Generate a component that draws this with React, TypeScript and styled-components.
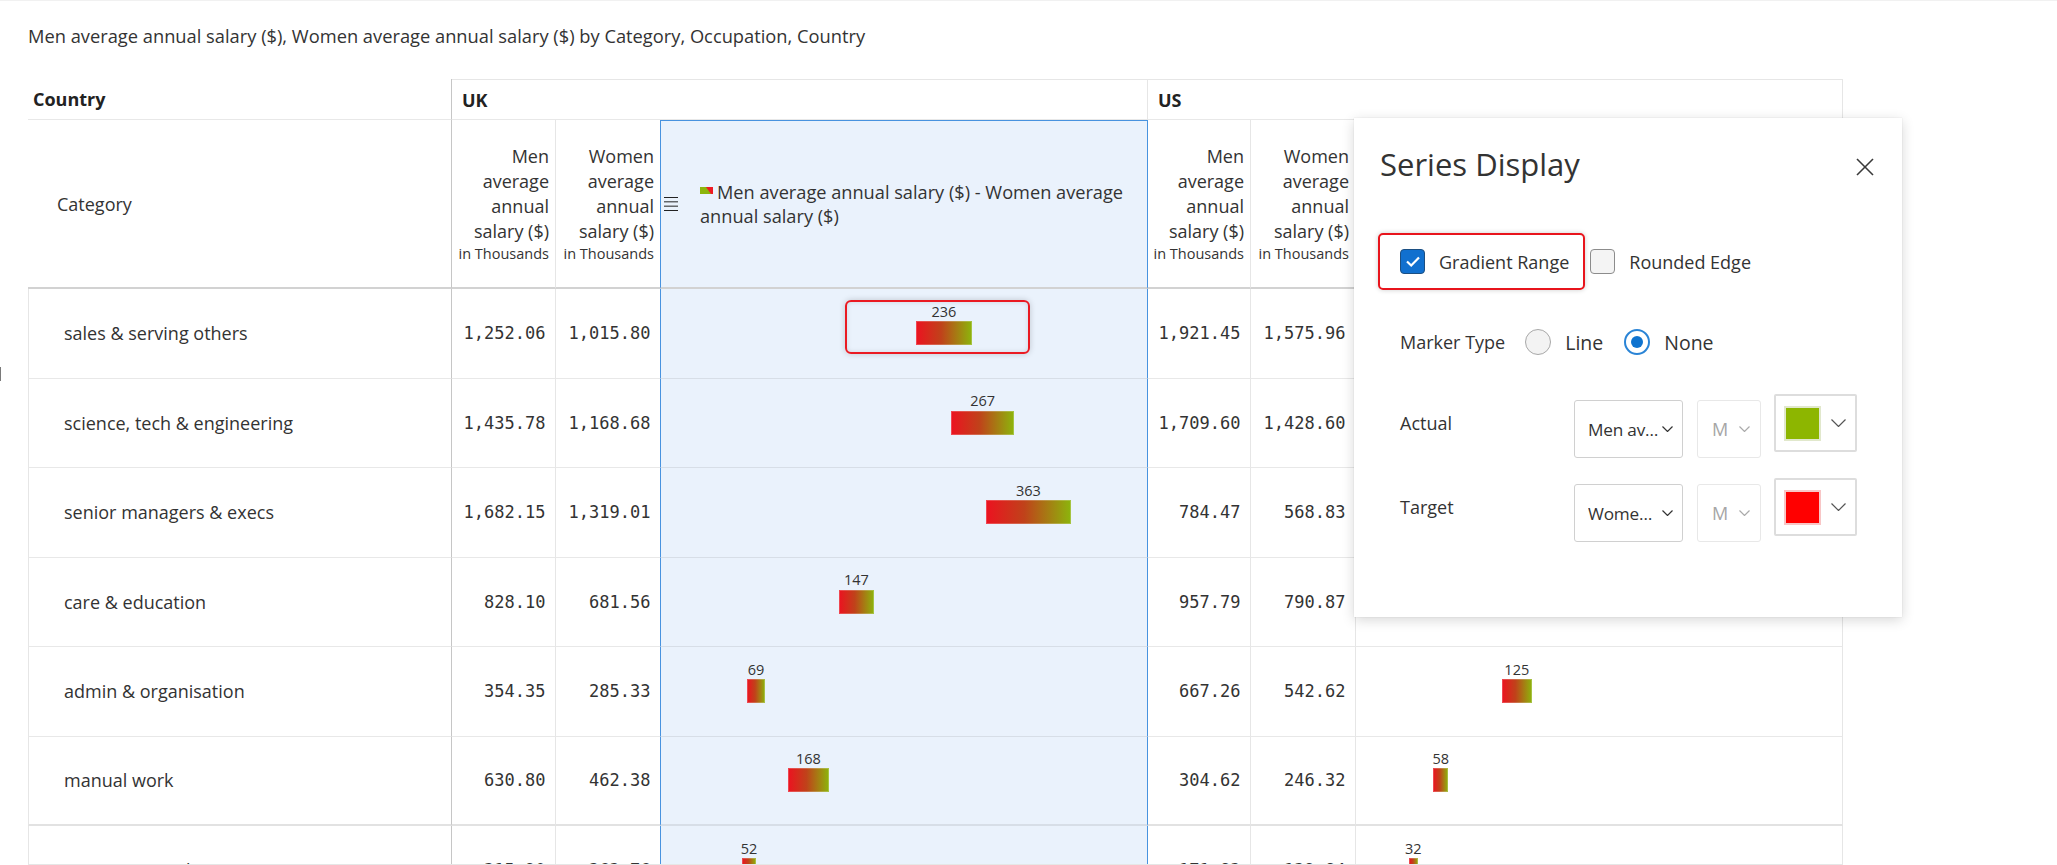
import React from 'react';
import styled, { createGlobalStyle, css } from 'styled-components';

const GlobalStyle = createGlobalStyle`
  html, body { margin: 0; padding: 0; background: #fff; }
  body { font-family: "Open Sans", "Noto Sans", Arial, sans-serif; color: #333; }
  * { box-sizing: border-box; }
`;

type Row = { label: string; ukMen: number; ukWomen: number; usMen: number; usWomen: number; strong?: boolean };

const rows: Row[] = [
  { label: 'sales & serving others', ukMen: 1252.06, ukWomen: 1015.8, usMen: 1921.45, usWomen: 1575.96 },
  { label: 'science, tech & engineering', ukMen: 1435.78, ukWomen: 1168.68, usMen: 1709.6, usWomen: 1428.6 },
  { label: 'senior managers & execs', ukMen: 1682.15, ukWomen: 1319.01, usMen: 784.47, usWomen: 568.83 },
  { label: 'care & education', ukMen: 828.1, ukWomen: 681.56, usMen: 957.79, usWomen: 790.87 },
  { label: 'admin & organisation', ukMen: 354.35, ukWomen: 285.33, usMen: 667.26, usWomen: 542.62 },
  { label: 'manual work', ukMen: 630.8, ukWomen: 462.38, usMen: 304.62, usWomen: 246.32, strong: true },
  { label: 'creative & media', ukMen: 315.9, ukWomen: 263.76, usMen: 171.83, usWomen: 139.84 },
];

const SCALE = 0.2307;
const fmt = (n: number) => n.toLocaleString('en-US', { minimumFractionDigits: 2, maximumFractionDigits: 2 });

const Page = styled.div`
  position: relative;
  height: 865px;
  overflow: hidden;
  padding: 23px 0 0 28px;
  border-top: 1px solid #f1f1f1;
`;

const Title = styled.div`
  font-size: 18.3px;
  line-height: 24px;
  color: #333;
`;

const TableWrap = styled.div`
  margin-top: 31px;
  width: 1815px;
  height: 786px;
  overflow: hidden;
  border-bottom: 1px solid #e6e6e6;
`;

const Grid = styled.div`
  display: grid;
  grid-template-columns: 424px 104px 104px 488px 103px 105px 487px;
`;

const CornerCell = styled.div`
  height: 41px;
  display: flex;
  align-items: center;
  padding-left: 5px;
  font-size: 18px;
  font-weight: 700;
  color: #222;
  border-right: 1px solid #c6c6c6;
  border-bottom: 1px solid #e8e8e8;
`;

const GroupCell = styled.div<{ $span: string }>`
  grid-column: ${(p) => p.$span};
  height: 41px;
  display: flex;
  align-items: center;
  padding-left: 10px;
  font-size: 18px;
  font-weight: 700;
  color: #222;
  border-top: 1px solid #e6e6e6;
  border-right: 1px solid #e6e6e6;
  border-bottom: 1px solid #e8e8e8;
`;

const CategoryHead = styled.div`
  height: 169px;
  display: flex;
  align-items: center;
  padding-left: 29px;
  font-size: 18px;
  color: #333;
  border-right: 1px solid #c6c6c6;
  border-bottom: 2px solid #d2d2d2;
`;

const MeasureHead = styled.div<{ $divider?: boolean }>`
  height: 169px;
  display: flex;
  flex-direction: column;
  justify-content: center;
  align-items: flex-end;
  text-align: right;
  padding: 0 6px 0 3px;
  font-size: 18px;
  line-height: 25px;
  color: #333;
  border-bottom: 2px solid #d2d2d2;
  ${(p) => p.$divider && 'border-right: 1px solid #e6e6e6;'}
`;

const Unit = styled.span`
  font-size: 14.5px;
  line-height: 19px;
  white-space: nowrap;
`;

const activeCol = css`
  background: #eaf2fc;
  border-left: 1px solid #4893df;
  border-right: 1px solid #4893df;
`;

const ChartHead = styled.div<{ $active?: boolean }>`
  height: 169px;
  display: flex;
  align-items: center;
  padding: 0 12px 0 3px;
  overflow: hidden;
  border-bottom: 2px solid #d2d2d2;
  border-right: 1px solid #e6e6e6;
  ${(p) => p.$active && activeCol}
  ${(p) => p.$active && 'border-top: 1px solid #4893df;'}
`;

const HeadText = styled.div`
  margin-left: 22px;
  font-size: 18.2px;
  line-height: 24.5px;
  color: #333;
`;

const LegendMark = styled.svg`
  margin-right: 4px;
  vertical-align: 5px;
`;

const rowBorder = (strong?: boolean) => (strong ? '2px solid #e2e2e2' : '1px solid #e8e8e8');

const LabelCell = styled.div<{ $strong?: boolean }>`
  height: 89.5px;
  display: flex;
  align-items: center;
  padding-left: 35px;
  font-size: 18px;
  color: #333;
  border-left: 1px solid #e6e6e6;
  border-right: 1px solid #c6c6c6;
  border-bottom: ${(p) => rowBorder(p.$strong)};
`;

const ValueCell = styled.div<{ $strong?: boolean; $divider?: boolean }>`
  height: 89.5px;
  display: flex;
  align-items: center;
  justify-content: flex-end;
  padding-right: 9.5px;
  font-family: "DejaVu Sans Mono", "Liberation Mono", monospace;
  font-size: 17px;
  color: #333;
  border-bottom: ${(p) => rowBorder(p.$strong)};
  ${(p) => p.$divider && 'border-right: 1px solid #e6e6e6;'}
`;

const ChartCell = styled.div<{ $strong?: boolean; $active?: boolean }>`
  height: 89.5px;
  display: flex;
  align-items: center;
  border-right: 1px solid #e6e6e6;
  border-bottom: ${(p) => rowBorder(p.$strong)};
  ${(p) => p.$active && activeCol}
  ${(p) => p.$active && `border-bottom-color: #d7dee7;`}
`;

const Bar = styled.div`
  position: relative;
  height: 24px;
  flex: none;
  background: linear-gradient(90deg, #ec1220 0%, #c0421a 45%, #8cb50c 100%);
  box-shadow: inset 0 0 0 1px rgba(255, 255, 255, 0.22);
`;

const BarLabel = styled.span`
  position: absolute;
  bottom: calc(100% + 2px);
  left: 50%;
  transform: translateX(-50%);
  font-size: 14.5px;
  line-height: 1;
  color: #333;
  white-space: nowrap;
`;

const Callout = styled.div`
  position: absolute;
  left: -71px;
  top: -21px;
  width: 185px;
  height: 54px;
  border: 2px solid #ea1a22;
  border-radius: 6px;
  box-shadow: 0 0 6px rgba(0, 0, 0, 0.18), inset 0 0 5px rgba(0, 0, 0, 0.12);
  pointer-events: none;
`;

const EdgeMark = styled.div`
  position: absolute;
  left: 0;
  top: 366px;
  width: 1px;
  height: 14px;
  background: #7a7a7a;
`;

/* ---------- Popup ---------- */

const Popup = styled.div`
  position: absolute;
  left: 1354px;
  top: 117px;
  width: 548px;
  height: 499px;
  background: #fff;
  box-shadow: 0 3px 12px rgba(0, 0, 0, 0.16), 0 0 1px rgba(0, 0, 0, 0.14);
  padding: 25px 28px 0 26px;
`;

const PopupHeader = styled.div`
  display: flex;
  align-items: center;
  justify-content: space-between;
  height: 42px;
`;

const PopupTitle = styled.h2`
  margin: 0;
  font-size: 31px;
  font-weight: 400;
  line-height: 42px;
  color: #333;
`;

const CloseButton = styled.button`
  border: 0;
  background: none;
  padding: 0;
  margin-top: 6px;
  width: 18px;
  height: 18px;
  display: flex;
`;

const CheckRow = styled.div`
  display: flex;
  align-items: center;
  gap: 21px;
  height: 25px;
  margin-top: 64px;
  padding-left: 20px;
`;

const CheckItem = styled.label`
  position: relative;
  display: flex;
  align-items: center;
  gap: 14px;
  font-size: 18px;
  color: #333;
`;

const CheckBox = styled.span<{ $checked?: boolean }>`
  width: 25px;
  height: 25px;
  border-radius: 4px;
  display: flex;
  align-items: center;
  justify-content: center;
  ${(p) =>
    p.$checked
      ? 'background: #1170cf; border: 1.5px solid #1c4f82;'
      : 'background: #f4f4f4; border: 1.5px solid #8c8c8c;'}
`;

const Highlight = styled.span`
  position: absolute;
  top: -16px;
  bottom: -16px;
  left: -22px;
  right: -16px;
  border: 2px solid #e8141c;
  border-radius: 5px;
  box-shadow: 0 0 5px rgba(0, 0, 0, 0.2);
  pointer-events: none;
`;

const MarkerRow = styled.div`
  display: flex;
  align-items: center;
  height: 26px;
  margin-top: 55px;
  padding-left: 20px;
`;

const FieldName = styled.span`
  font-size: 18px;
  color: #333;
  margin-right: 20px;
`;

const RadioOption = styled.label`
  display: flex;
  align-items: center;
  gap: 14px;
  font-size: 19.5px;
  color: #333;
  margin-right: 21px;
`;

const Radio = styled.span<{ $checked?: boolean }>`
  position: relative;
  width: 26px;
  height: 26px;
  border-radius: 50%;
  ${(p) =>
    p.$checked
      ? css`
          border: 2px solid #2a84d6;
          background: #fff;
          &::after {
            content: '';
            position: absolute;
            left: 50%;
            top: 50%;
            width: 12px;
            height: 12px;
            margin: -6px 0 0 -6px;
            border-radius: 50%;
            background: #0f73cf;
          }
        `
      : 'border: 1.5px solid #a8a8a8; background: #f3f3f3;'}
`;

const FieldRow = styled.div<{ $gap: number }>`
  display: flex;
  align-items: flex-start;
  margin-top: ${(p) => p.$gap}px;
  padding-left: 20px;
`;

const FieldLabel = styled.span`
  width: 174px;
  height: 58px;
  display: flex;
  align-items: center;
  font-size: 18px;
  color: #333;
`;

const Select = styled.div<{ $disabled?: boolean }>`
  margin-top: 6px;
  height: 58px;
  display: flex;
  align-items: center;
  border-radius: 3px;
  font-size: 18px;
  ${(p) =>
    p.$disabled
      ? 'width: 64px; margin-left: 14px; padding: 0 0 0 14px; gap: 11px; border: 1px solid #e8e8e8; color: #a6a6a6;'
      : 'width: 109px; padding: 0 9px 0 13px; gap: 1px; border: 1px solid #d0d0d0; color: #333;'}
`;

const SelectText = styled.span`
  flex: 1;
  min-width: 0;
  font-size: 17.2px;
  letter-spacing: -0.2px;
  white-space: nowrap;
  overflow: hidden;
  text-overflow: ellipsis;
`;

const ColorPicker = styled.div`
  margin-left: 13px;
  width: 83px;
  height: 58px;
  display: flex;
  align-items: center;
  padding-left: 8px;
  border: 2px solid #dddddd;
  border-radius: 2px;
`;

const Swatch = styled.span<{ $fill: string; $edge: string }>`
  width: 37px;
  height: 35px;
  background: ${(p) => p.$fill};
  border: 2px solid ${(p) => p.$edge};
  margin-right: 10px;
`;

/* ---------- Icons ---------- */

const Hamburger = () => (
  <svg width="14" height="14" viewBox="0 0 14 14" style={{ flex: 'none' }}>
    {[0.5, 4.83, 9.17, 13.5].map((y) => (
      <line key={y} x1="0" y1={y} x2="14" y2={y} stroke="#222" strokeWidth="1" />
    ))}
  </svg>
);

const Legend = () => (
  <LegendMark width="13" height="7" viewBox="0 0 13 7">
    <rect width="13" height="7" fill="#8cb50c" />
    <polygon points="6,0 13,0 13,7 11,7" fill="#ee1b24" />
  </LegendMark>
);

const Chevron = ({ w = 11, color = '#333' }: { w?: number; color?: string }) => (
  <svg width={w} height={w / 2 + 1} viewBox={`0 0 ${w} ${w / 2 + 1}`} style={{ flex: 'none' }}>
    <polyline points={`0.5,0.5 ${w / 2},${w / 2} ${w - 0.5},0.5`} fill="none" stroke={color} strokeWidth="1.2" />
  </svg>
);

const CloseIcon = () => (
  <svg width="18" height="18" viewBox="0 0 18 18">
    <line x1="1" y1="1" x2="17" y2="17" stroke="#3a3a3a" strokeWidth="1.6" />
    <line x1="17" y1="1" x2="1" y2="17" stroke="#3a3a3a" strokeWidth="1.6" />
  </svg>
);

const CheckMark = () => (
  <svg width="16" height="13" viewBox="0 0 16 13">
    <polyline points="2,6.5 6.2,10.5 14,2.5" fill="none" stroke="#fff" strokeWidth="2.2" />
  </svg>
);

/* ---------- Parts ---------- */

function RangeBar({ from, to, callout }: { from: number; to: number; callout?: boolean }) {
  const diff = to - from;
  return (
    <Bar style={{ marginLeft: 20.5 + SCALE * from, width: SCALE * diff + 1.5 }}>
      <BarLabel>{Math.round(diff)}</BarLabel>
      {callout && <Callout />}
    </Bar>
  );
}

const MeasureLines = ({ name }: { name: string }) => (
  <>
    <span>{name} average annual salary ($)</span>
    <Unit>in Thousands</Unit>
  </>
);

const ChartHeading = () => (
  <>
    <Hamburger />
    <HeadText>
      <Legend />
      Men average annual salary ($) - Women average annual salary ($)
    </HeadText>
  </>
);

function SeriesDisplay() {
  return (
    <Popup>
      <PopupHeader>
        <PopupTitle>Series Display</PopupTitle>
        <CloseButton aria-label="Close">
          <CloseIcon />
        </CloseButton>
      </PopupHeader>
      <CheckRow>
        <CheckItem>
          <CheckBox $checked>
            <CheckMark />
          </CheckBox>
          Gradient Range
          <Highlight />
        </CheckItem>
        <CheckItem>
          <CheckBox />
          Rounded Edge
        </CheckItem>
      </CheckRow>
      <MarkerRow>
        <FieldName>Marker Type</FieldName>
        <RadioOption>
          <Radio />
          Line
        </RadioOption>
        <RadioOption>
          <Radio $checked />
          None
        </RadioOption>
      </MarkerRow>
      <FieldRow $gap={39}>
        <FieldLabel>Actual</FieldLabel>
        <Select>
          <SelectText>Men average annual salary ($)</SelectText>
          <Chevron />
        </Select>
        <Select $disabled>
          M<Chevron color="#aaa" />
        </Select>
        <ColorPicker>
          <Swatch $fill="#8db600" $edge="#e1e8cc" />
          <Chevron w={15} color="#555" />
        </ColorPicker>
      </FieldRow>
      <FieldRow $gap={20}>
        <FieldLabel>Target</FieldLabel>
        <Select>
          <SelectText>Women average annual salary ($)</SelectText>
          <Chevron />
        </Select>
        <Select $disabled>
          M<Chevron color="#aaa" />
        </Select>
        <ColorPicker>
          <Swatch $fill="#ff0000" $edge="#f8c6c6" />
          <Chevron w={15} color="#555" />
        </ColorPicker>
      </FieldRow>
    </Popup>
  );
}

export default function App() {
  return (
    <>
      <GlobalStyle />
      <Page>
        <Title>Men average annual salary ($), Women average annual salary ($) by Category, Occupation, Country</Title>
        <TableWrap>
          <Grid>
            <CornerCell>Country</CornerCell>
            <GroupCell $span="2 / span 3">UK</GroupCell>
            <GroupCell $span="5 / span 3">US</GroupCell>

            <CategoryHead>Category</CategoryHead>
            <MeasureHead $divider>
              <MeasureLines name="Men" />
            </MeasureHead>
            <MeasureHead>
              <MeasureLines name="Women" />
            </MeasureHead>
            <ChartHead $active>
              <ChartHeading />
            </ChartHead>
            <MeasureHead $divider>
              <MeasureLines name="Men" />
            </MeasureHead>
            <MeasureHead $divider>
              <MeasureLines name="Women" />
            </MeasureHead>
            <ChartHead>
              <ChartHeading />
            </ChartHead>

            {rows.map((r, i) => (
              <React.Fragment key={r.label}>
                <LabelCell $strong={r.strong}>{r.label}</LabelCell>
                <ValueCell $strong={r.strong} $divider>{fmt(r.ukMen)}</ValueCell>
                <ValueCell $strong={r.strong}>{fmt(r.ukWomen)}</ValueCell>
                <ChartCell $strong={r.strong} $active>
                  <RangeBar from={r.ukWomen} to={r.ukMen} callout={i === 0} />
                </ChartCell>
                <ValueCell $strong={r.strong} $divider>{fmt(r.usMen)}</ValueCell>
                <ValueCell $strong={r.strong} $divider>{fmt(r.usWomen)}</ValueCell>
                <ChartCell $strong={r.strong}>
                  <RangeBar from={r.usWomen} to={r.usMen} />
                </ChartCell>
              </React.Fragment>
            ))}
          </Grid>
        </TableWrap>
        <SeriesDisplay />
        <EdgeMark />
      </Page>
    </>
  );
}
